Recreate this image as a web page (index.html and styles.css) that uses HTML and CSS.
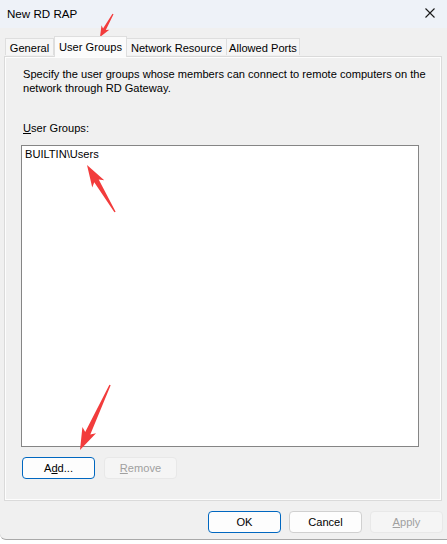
FILE: index.html
```html
<!DOCTYPE html>
<html>
<head>
<meta charset="utf-8">
<link rel="stylesheet" href="styles.css">
</head>
<body>
<div class="window">
  <div class="titlebar">
    <span class="title">New RD RAP</span>
    <svg class="close" width="10" height="10" viewBox="0 0 10 10"><path d="M0.5 0.5 L9.5 9.5 M9.5 0.5 L0.5 9.5" stroke="#1a1a1a" stroke-width="1.1" fill="none"/></svg>
  </div>
  <div class="tabs">
    <div class="tab tab-general">General</div>
    <div class="tab tab-users selected">User Groups</div>
    <div class="tab tab-network">Network Resource</div>
    <div class="tab tab-ports">Allowed Ports</div>
  </div>
  <div class="panel">
    <p class="desc">Specify the user groups whose members can connect to remote computers on the network through RD Gateway.</p>
    <div class="label"><u>U</u>ser Groups:</div>
    <div class="listbox">
      <div class="item">BUILTIN\Users</div>
    </div>
    <div class="row">
      <button class="btn primary">A<u>d</u>d...</button>
      <button class="btn disabled"><u>R</u>emove</button>
    </div>
  </div>
  <div class="footer">
    <button class="btn primary">OK</button>
    <button class="btn">Cancel</button>
    <button class="btn disabled"><u>A</u>pply</button>
  </div>
</div>
<svg class="arrows" width="447" height="544" viewBox="0 0 447 544">
  <g fill="#f23c3c">
    <g transform="translate(100,37) rotate(209.5)">
      <polygon points="0,0 4.5,11 1.6,9 0.6,26.4 -0.6,26.4 -1.6,9 -4.5,11"/>
    </g>
    <g transform="translate(87,165) rotate(-30.8)">
      <polygon points="0,0 7,22 2.6,18.5 0.7,54.7 -0.7,54.7 -2.6,18.5 -7,22"/>
    </g>
    <g transform="translate(80,450) rotate(204.8)">
      <polygon points="0,0 7.5,22 2.8,18.5 0.7,71.6 -0.7,71.6 -2.8,18.5 -7.5,22"/>
    </g>
  </g>
</svg>
</body>
</html>
```
FILE: styles.css
```css
* { box-sizing: border-box; }
html, body {
  margin: 0;
  padding: 0;
  background: #ffffff;
}
body {
  position: relative;
  width: 447px;
  height: 544px;
  overflow: hidden;
  font-family: "Liberation Sans", Arial, sans-serif;
  font-size: 11.1px;
  color: #000;
}
.window {
  width: 447px;
  height: 540px;
  background: #f0f0f0;
  border-bottom: 1px solid #a9a9a9;
  border-bottom-left-radius: 6px;
  display: flex;
  flex-direction: column;
}
.titlebar {
  height: 28px;
  flex: none;
  background: #eef2f8;
  display: flex;
  align-items: center;
  justify-content: space-between;
  padding: 0 7px 2px 7px;
}
.title { font-size: 11.6px; }
.close { margin-right: 5px; }
.tabs {
  display: flex;
  align-items: flex-end;
  height: 21px;
  margin: 7px 0 0 5px;
  flex: none;
}
.tab {
  height: 17px;
  margin-bottom: 1px;
  background: #f6f6f6;
  border: 1px solid #dedede;
  border-bottom: none;
  display: flex;
  align-items: center;
  justify-content: center;
  position: relative;
  padding-top: 1px;
  white-space: nowrap;
}
.tab + .tab { border-left: none; }
.tab-general { width: 49px; }
.tab-users { width: 73px; }
.tab-network { width: 100px; }
.tab-ports { width: 73px; }
.tab.selected {
  height: 21px;
  margin-bottom: -1px;
  background: #fbfbfb;
  border: 1px solid #dedede;
  border-bottom: none;
  z-index: 2;
  padding-top: 0;
  padding-bottom: 1px;
}
.panel {
  margin: 0 5px 0 4px;
  height: 445px;
  flex: none;
  border: 1px solid #dadada;
  box-shadow: inset 1px 1px 0 #fdfdfd, inset -1px -1px 0 #fdfdfd;
  background: #f0f0f0;
  padding: 10px 0 0 16px;
  display: flex;
  flex-direction: column;
}
.desc {
  margin: 0 0 0 2px;
  line-height: 14px;
  width: 412px;
}
.label {
  margin: 26px 0 0 2px;
  line-height: 14px;
}
.listbox {
  margin-top: 10px;
  width: 398px;
  height: 302px;
  background: #fff;
  border: 1px solid #858585;
  padding: 1px 3px;
}
.item { line-height: 14px; }
.row {
  display: flex;
  gap: 9px;
  margin: 10px 0 0 1px;
}
.btn {
  width: 73px;
  height: 22px;
  font-family: inherit;
  font-size: 11.1px;
  color: #000;
  background: #fdfdfd;
  border: 1px solid #d0d0d0;
  border-radius: 4px;
  padding: 0;
}
.btn.primary {
  border-color: #0067c0;
}
.btn.disabled {
  background: #f5f5f5;
  border-color: #e8e8e8;
  color: #a0a0a0;
}
.footer {
  display: flex;
  justify-content: flex-end;
  gap: 8px;
  margin: 10px 4px 0 0;
}
.arrows {
  position: absolute;
  left: 0;
  top: 0;
  pointer-events: none;
}
```
